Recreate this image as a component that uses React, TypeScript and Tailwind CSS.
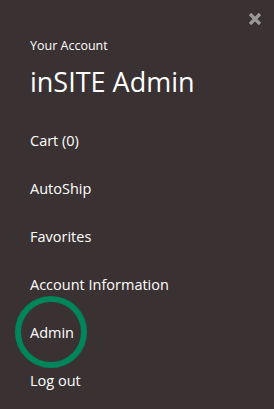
export default function App() {
  const items = ["Cart (0)", "AutoShip", "Favorites", "Account Information", "Admin", "Log out"];

  return (
    <div
      className="relative w-[274px] h-[409px] bg-[#3a3132] text-white overflow-hidden"
      style={{ fontFamily: '"Open Sans", "Liberation Sans", sans-serif' }}
    >
      <button className="absolute right-[12px] top-[12px] w-[14px] h-[14px] text-[#9b9899]" aria-label="Close">
        <svg viewBox="0 0 14 14" width="14" height="14">
          <path d="M2 2 L12 12 M12 2 L2 12" stroke="currentColor" strokeWidth="3.2" strokeLinecap="butt" />
        </svg>
      </button>

      <div className="pl-[30px] pt-[36px]">
        <p className="text-[12.5px] leading-[20px]">Your Account</p>
        <h1 className="text-[27px] leading-[34px] mt-[9px]">inSITE Admin</h1>

        <ul className="mt-[18px]">
          {items.map((item) => (
            <li key={item} className="relative h-[48px] flex items-center">
              {item === "Admin" && (
                <span className="absolute left-[-15px] top-[-13px] w-[72px] h-[72px] rounded-full border-[6px] border-[#00845a]" />
              )}
              <a href="#" className="relative text-[14.5px] leading-[20px]">
                {item}
              </a>
            </li>
          ))}
        </ul>
      </div>
    </div>
  );
}
